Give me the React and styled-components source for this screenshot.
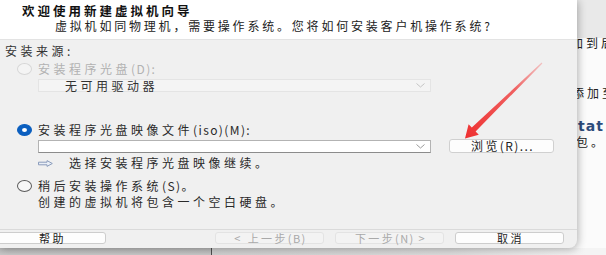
import React from 'react'
import styled, { createGlobalStyle } from 'styled-components'

const GlobalStyle = createGlobalStyle`
  html, body {
    margin: 0;
    padding: 0;
    background: #fafafa;
  }

  body {
    font-family: "Noto Sans CJK SC", "Noto Sans", sans-serif;
    font-size: 12px;
    -webkit-font-smoothing: antialiased;
  }

  #root {
    width: 606px;
    height: 255px;
    overflow: hidden;
  }
`

const Stage = styled.div`
  position: relative;
  display: grid;
  grid-template-columns: 577px 29px;
  grid-template-rows: 248px 7px;
  width: 606px;
  height: 255px;
  overflow: hidden;
`

const Dialog = styled.div`
  grid-column: 1;
  grid-row: 1;
  position: relative;
  z-index: 2;
  display: flex;
  flex-direction: column;
  background: #f0f0f0;
  border-bottom-right-radius: 8px;
  box-shadow: 1px 1px 8px rgba(0, 0, 0, 0.3);
  overflow: hidden;
`

const Header = styled.div`
  height: 40px;
  box-sizing: border-box;
  padding: 4px 0 0 22px;
  background: #ffffff;
  border-bottom: 1px solid #e3e3e3;
`

const Title = styled.div`
  height: 13px;
  line-height: 13px;
  font-size: 12.5px;
  font-weight: bold;
  letter-spacing: 3px;
  color: #111;
`

const Subtitle = styled.div`
  height: 13px;
  line-height: 13px;
  margin-top: 2px;
  margin-left: 33px;
  letter-spacing: 2.8px;
  color: #222;
`

// latin pieces inside CJK labels are set tighter than the CJK glyphs
const Latin = styled.span`
  letter-spacing: 1.4px;
`

const Body = styled.div`
  flex: 1;
  display: flex;
  flex-direction: column;
  padding: 4px 0 0 5px;
  letter-spacing: 3.5px;
  color: #2a2a2a;
`

const SectionLabel = styled.div`
  height: 14px;
  line-height: 14px;
  color: #333;
`

const OptionRow = styled.div`
  display: flex;
  align-items: center;
  gap: 6px;
  height: 14px;
  line-height: 14px;
  margin-left: 12px;
  margin-top: ${({ $top }) => $top}px;
  color: ${({ $disabled }) => ($disabled ? '#b2b2b2' : '#2a2a2a')};
`

const Radio = styled.span`
  position: relative;
  flex: none;
  width: 15px;
  height: 12px;
  box-sizing: border-box;
  border-radius: 50%;
  border: 1px solid
    ${({ $checked, $disabled }) =>
      $checked ? '#0b5fbf' : $disabled ? '#d6d6d6' : '#5a5a5a'};
  background: ${({ $checked, $disabled }) =>
    $checked ? '#0b5fbf' : $disabled ? '#f4f4f4' : '#f7f7f7'};

  &::after {
    content: '';
    display: ${({ $checked }) => ($checked ? 'block' : 'none')};
    position: absolute;
    left: 4px;
    top: 3px;
    width: 5px;
    height: 4px;
    border-radius: 50%;
    background: #ffffff;
  }
`

const Select = styled.div`
  display: flex;
  align-items: center;
  justify-content: space-between;
  width: 393px;
  height: 13px;
  box-sizing: border-box;
  padding: 0 5px 0 26px;
  border: 1px solid ${({ $disabled }) => ($disabled ? '#e4e4e4' : '#b3b3b3')};
  border-bottom-color: ${({ $disabled }) => ($disabled ? '#e4e4e4' : '#8c8c8c')};
  background: ${({ $disabled }) => ($disabled ? '#f4f4f4' : '#ffffff')};
  line-height: 12px;
  color: #333;
`

const IndentBlock = styled.div`
  margin-left: 33px;
  margin-top: ${({ $top }) => $top}px;
`

const FileRow = styled.div`
  display: flex;
  align-items: center;
  gap: 18px;
  height: 14px;
  margin-left: 33px;
  margin-top: 2px;
`

const BrowseButton = styled.div`
  width: 105px;
  height: 14px;
  box-sizing: border-box;
  padding-left: 2px;
  border: 1px solid #d0d0d0;
  border-radius: 3px;
  background: #fdfdfd;
  text-align: center;
  line-height: 12px;
  letter-spacing: 2.4px;
  color: #222;
`

const Hint = styled.div`
  display: flex;
  align-items: center;
  gap: 16px;
  height: 14px;
  line-height: 14px;
  margin-left: 33px;
  margin-top: 3px;
  color: #2a2a2a;
`

const Description = styled.div`
  height: 14px;
  line-height: 14px;
  margin-left: 33px;
  margin-top: 2px;
  color: #2a2a2a;
`

const Footer = styled.div`
  display: flex;
  justify-content: space-between;
  align-items: flex-start;
  height: 19px;
  box-sizing: border-box;
  padding: 2px 13px 0 0;
  border-top: 1px solid #dadada;
`

const ButtonGroup = styled.div`
  display: flex;
  gap: 11px;
`

const FooterButton = styled.div`
  width: 109px;
  height: 12px;
  box-sizing: border-box;
  margin-left: ${({ $shift }) => $shift || 0}px;
  padding-left: 2px;
  border: 1px solid ${({ $disabled }) => ($disabled ? '#e3e3e3' : '#cdcdcd')};
  border-radius: 3px;
  background: ${({ $disabled }) => ($disabled ? '#f3f3f3' : '#fdfdfd')};
  text-align: center;
  font-size: 11px;
  line-height: 10px;
  letter-spacing: 2.4px;
  color: ${({ $disabled }) => ($disabled ? '#a9a9a9' : '#222')};
`

const BelowDialog = styled.div`
  grid-column: 1 / span 2;
  grid-row: 2;
  display: flex;
`

const BelowLeft = styled.div`
  width: 211px;
  background: linear-gradient(#b9b9b9, #c8c8c8);
  border-right: 1px solid #4e4e4e;
`

const BelowRight = styled.div`
  flex: 1;
  background: linear-gradient(to right, #cfcfcf, #dcdcdc 60%, #f4f4f4 95%);
`

const BackStrip = styled.div`
  grid-column: 2;
  grid-row: 1;
  display: flex;
  flex-direction: column;
  overflow: hidden;
  background: #fbfbfb;
  white-space: nowrap;
  letter-spacing: 3px;
  color: #222;
`

const BackStripTop = styled.div`
  flex: none;
  height: 38px;
  background: #e9e9e9;
`

const BackText = styled.div`
  height: 14px;
  line-height: 14px;
  margin-top: ${({ $top }) => $top}px;
  margin-left: ${({ $shift }) => $shift}px;
`

const BackHeading = styled.div`
  height: 16px;
  line-height: 16px;
  margin-top: 18px;
  margin-left: -10px;
  font-family: "DejaVu Sans", sans-serif;
  font-size: 14px;
  font-weight: bold;
  letter-spacing: 1px;
  color: #2d4c7c;
`

const Overlay = styled.svg`
  position: absolute;
  left: 0;
  top: 0;
  z-index: 3;
  pointer-events: none;
`

const Chevron = ({ color }) => (
  <svg width="9" height="5" viewBox="0 0 9 5">
    <polyline points="0.5,0.5 4.5,4 8.5,0.5" fill="none" stroke={color} strokeWidth="1" />
  </svg>
)

const HintArrow = () => (
  <svg width="15" height="7" viewBox="0 0 15 7">
    <path
      d="M0.5 2.2 H9 V0.6 L14.3 3.5 L9 6.4 V4.8 H0.5 Z"
      fill="#e9eef6"
      stroke="#8a9cbc"
      strokeWidth="1"
    />
  </svg>
)

const RedArrow = () => (
  <Overlay width="606" height="255" viewBox="0 0 606 255">
    <defs>
      <linearGradient id="arrowFade" x1="542" y1="63" x2="465" y2="138" gradientUnits="userSpaceOnUse">
        <stop offset="0" stopColor="#f36a6a" stopOpacity="0.35" />
        <stop offset="0.35" stopColor="#f04848" stopOpacity="0.85" />
        <stop offset="1" stopColor="#ee3030" />
      </linearGradient>
    </defs>
    <polygon
      points="541.6,62.6 542.4,63.4 475.6,131.4 478.8,134.8 465,138.5 468.6,124.2 471.8,127.6"
      fill="url(#arrowFade)"
    />
  </Overlay>
)

export default function App() {
  return (
    <>
      <GlobalStyle />
      <Stage>
        <Dialog>
          <Header>
            <Title>欢迎使用新建虚拟机向导</Title>
            <Subtitle>虚拟机如同物理机，需要操作系统。您将如何安装客户机操作系统?</Subtitle>
          </Header>

          <Body>
            <SectionLabel>安装来源:</SectionLabel>

            <OptionRow $top={4} $disabled>
              <Radio $disabled />
              <span>
                安装程序光盘<Latin>(D):</Latin>
              </span>
            </OptionRow>
            <IndentBlock $top={3}>
              <Select $disabled>
                无可用驱动器
                <Chevron color="#c4c4c4" />
              </Select>
            </IndentBlock>

            <OptionRow $top={31}>
              <Radio $checked />
              <span>
                安装程序光盘映像文件<Latin>(iso)(M):</Latin>
              </span>
            </OptionRow>
            <FileRow>
              <Select>
                <span />
                <Chevron color="#9a9a9a" />
              </Select>
              <BrowseButton>
                浏览<Latin>(R)...</Latin>
              </BrowseButton>
            </FileRow>
            <Hint>
              <HintArrow />
              选择安装程序光盘映像继续。
            </Hint>

            <OptionRow $top={9}>
              <Radio />
              <span>
                稍后安装操作系统<Latin>(S)</Latin>。
              </span>
            </OptionRow>
            <Description>创建的虚拟机将包含一个空白硬盘。</Description>
          </Body>

          <Footer>
            <FooterButton $shift={-3}>帮助</FooterButton>
            <ButtonGroup>
              <FooterButton $disabled>
                &lt; 上一步<Latin>(B)</Latin>
              </FooterButton>
              <FooterButton $disabled>
                下一步<Latin>(N) &gt;</Latin>
              </FooterButton>
              <FooterButton>取消</FooterButton>
            </ButtonGroup>
          </Footer>
        </Dialog>

        <BackStrip>
          <BackStripTop />
          <BackText $top={-2} $shift={-6}>加到后台</BackText>
          <BackText $top={36} $shift={-5}>添加至</BackText>
          <BackHeading>Stat</BackHeading>
          <BackText $top={1} $shift={-1}>包。</BackText>
        </BackStrip>

        <BelowDialog>
          <BelowLeft />
          <BelowRight />
        </BelowDialog>

        <RedArrow />
      </Stage>
    </>
  )
}
